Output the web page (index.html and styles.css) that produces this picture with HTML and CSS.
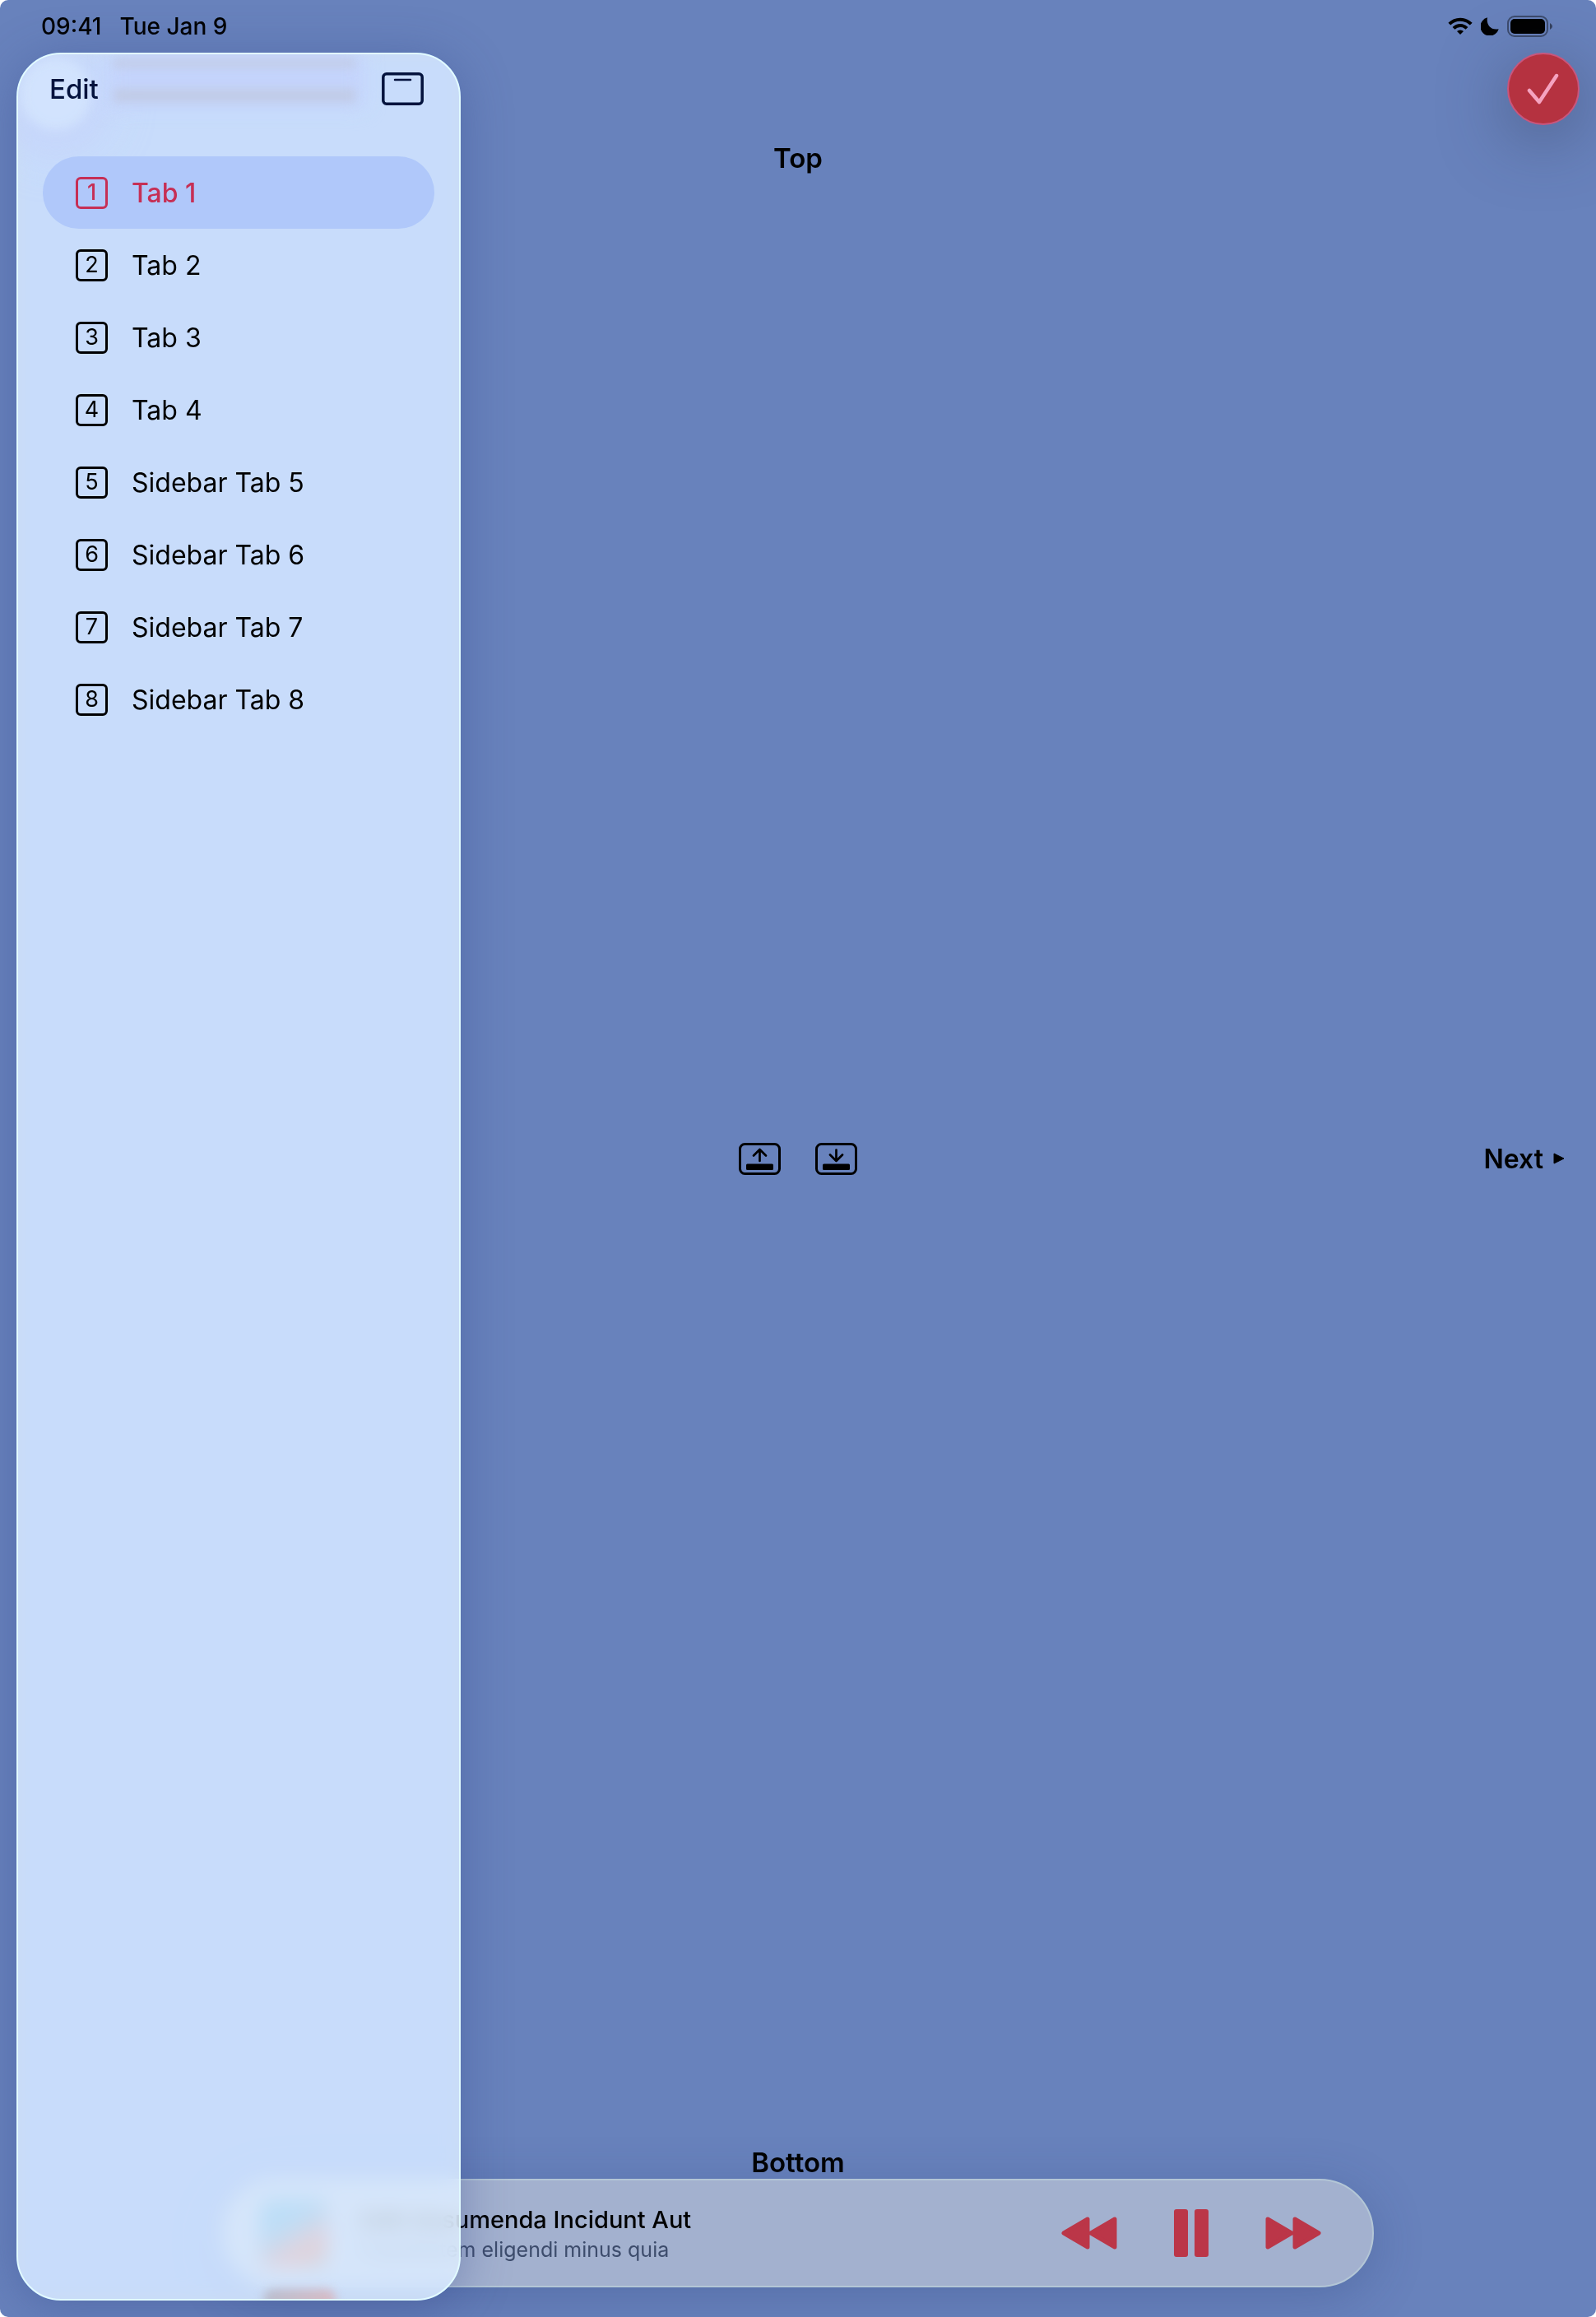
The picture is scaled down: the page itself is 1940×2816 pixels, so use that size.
FILE: index.html
```html
<!DOCTYPE html>
<html lang="en">
<head>
<meta charset="utf-8">
<meta name="viewport" content="width=device-width, initial-scale=1">
<title>Tabs</title>
<link rel="stylesheet" href="styles.css">
</head>
<body>
<div class="screen">
  <header class="status">
    <div class="status-group">
      <time>09:41</time>
      <span>Tue Jan 9</span>
    </div>
    <div class="status-icons">
      <svg width="30" height="22" viewBox="0 0 30 22" role="img" aria-label="Wi-Fi">
        <g fill="none" stroke="#000" stroke-width="4">
          <path d="M1.8 8.2a18.6 18.6 0 0 1 26.4 0"/>
          <path d="M7 13.4a11.3 11.3 0 0 1 16 0"/>
        </g>
        <path d="M15 21l-4-4a5.8 5.8 0 0 1 8 0z"/>
      </svg>
      <svg width="22" height="22" viewBox="0 0 22 22" role="img" aria-label="Focus">
        <path d="M8 .3C6.200 8.500 12 16.500 21.700 14.200A11.300 11.300 0 1 1 8 .3z"/>
      </svg>
      <svg width="56" height="26" viewBox="0 0 56 26" role="img" aria-label="Battery full">
        <rect x="1" y="1" width="48" height="24" rx="8" fill="none" stroke="#000" stroke-opacity=".42" stroke-width="2"/>
        <rect x="4" y="4" width="42" height="18" rx="5"/>
        <path d="M52 9q6 4 0 8z" fill-opacity=".5"/>
      </svg>
    </div>
  </header>

  <main class="content">
    <h1 class="label">Top</h1>
    <div class="middle">
      <div class="center-actions">
        <button class="plain" type="button" aria-label="Expand accessory">
          <svg width="51" height="39" viewBox="0 0 51 39">
            <rect x="1.500" y="1.500" width="48" height="36" rx="6" fill="none" stroke="#000" stroke-width="3"/>
            <rect x="9" y="25.500" width="33" height="7.500" rx="1.500"/>
            <path d="M25.500 22V8.500M18 15.500l7.500-7.500 7.500 7.500" fill="none" stroke="#000" stroke-width="2.700" stroke-linecap="round" stroke-linejoin="round"/>
          </svg>
        </button>
        <button class="plain" type="button" aria-label="Collapse accessory">
          <svg width="51" height="39" viewBox="0 0 51 39">
            <rect x="1.500" y="1.500" width="48" height="36" rx="6" fill="none" stroke="#000" stroke-width="3"/>
            <rect x="9" y="25.500" width="33" height="7.500" rx="1.500"/>
            <path d="M25.500 8.500V22M18 14.500l7.500 7.500 7.500-7.500" fill="none" stroke="#000" stroke-width="2.700" stroke-linecap="round" stroke-linejoin="round"/>
          </svg>
        </button>
      </div>
      <button class="plain next" type="button">Next
        <svg width="14" height="14" viewBox="0 0 14 14" aria-hidden="true"><path d="M1 1l12 6-12 6z" stroke="#000" stroke-linejoin="round"/></svg>
      </button>
    </div>
    <p class="label">Bottom</p>
  </main>

  <section class="player" aria-label="Now playing">
    <div class="artwork"></div>
    <div class="track">
      <p class="track-title">Odit Assumenda Incidunt Aut</p>
      <p class="track-sub">Cupiditatem eligendi minus quia</p>
    </div>
    <div class="controls">
      <button class="plain" type="button" aria-label="Rewind">
        <svg width="68" height="58" viewBox="0 0 68 58"><path d="M3 29L32 12v34zM36 29l29-17v34z" stroke-width="5" stroke-linejoin="round"/></svg>
      </button>
      <button class="plain" type="button" aria-label="Pause">
        <svg width="68" height="58" viewBox="0 0 68 58"><rect x="13" width="17" height="58" rx="3"/><rect x="38" width="17" height="58" rx="3"/></svg>
      </button>
      <button class="plain" type="button" aria-label="Fast forward">
        <svg width="68" height="58" viewBox="0 0 68 58"><path d="M3 12l29 17L3 46zM36 12l29 17-29 17z" stroke-width="5" stroke-linejoin="round"/></svg>
      </button>
    </div>
  </section>

  <button class="confirm" type="button" aria-label="Done">
    <svg width="40" height="40" viewBox="0 0 40 40"><path d="M3 22l12 14L36 4" fill="none" stroke="#f5a3c0" stroke-width="4.500" stroke-linecap="round" stroke-linejoin="round"/></svg>
  </button>

  <aside class="sidebar">
    <div class="glass" aria-hidden="true">
      <span class="glow"></span>
      <span class="haze"></span>
      <span class="smudge smudge-top"></span>
      <span class="smudge"></span>
      <span class="mirror"></span>
    </div>
    <div class="sidebar-head">
      <button class="plain edit" type="button">Edit</button>
      <button class="plain" type="button" aria-label="Toggle sidebar">
        <svg width="51" height="40" viewBox="0 0 51 40"><g fill="none" stroke="#04133d"><rect x="1.800" y="1.800" width="47.400" height="36.400" rx="4" stroke-width="3.500"/><path d="M16 9h19" stroke-width="2.500" stroke-linecap="round"/></g></svg>
      </button>
    </div>
    <nav class="tabs">
      <a class="tab active" href="#1" aria-current="page"><span class="num">1</span>Tab 1</a>
      <a class="tab" href="#2"><span class="num">2</span>Tab 2</a>
      <a class="tab" href="#3"><span class="num">3</span>Tab 3</a>
      <a class="tab" href="#4"><span class="num">4</span>Tab 4</a>
      <a class="tab" href="#5"><span class="num">5</span>Sidebar Tab 5</a>
      <a class="tab" href="#6"><span class="num">6</span>Sidebar Tab 6</a>
      <a class="tab" href="#7"><span class="num">7</span>Sidebar Tab 7</a>
      <a class="tab" href="#8"><span class="num">8</span>Sidebar Tab 8</a>
    </nav>
  </aside>
</div>
</body>
</html>
```
FILE: styles.css
```css
* { box-sizing: border-box; }

body {
  margin: 0;
  background: #fff;
  color: #000;
  font-family: Inter, "Liberation Sans", sans-serif;
}

p, h1 { margin: 0; }
svg { display: block; }

.screen {
  position: relative;
  display: flex;
  flex-direction: column;
  min-height: 100vh;
  padding-bottom: 36px;
  border-radius: 10px;
  overflow: hidden;
  background: #6882bc;
}

.plain {
  padding: 0;
  border: 0;
  background: none;
  color: inherit;
  font: inherit;
  cursor: pointer;
}

/* Status bar */
.status {
  display: flex;
  align-items: center;
  justify-content: space-between;
  height: 64px;
  padding: 0 52px 0 50px;
  font-size: 28px;
  font-weight: 500;
}
.status-group { display: flex; gap: 22px; }
.status-icons { display: flex; align-items: center; gap: 10px; }

/* Main content */
.content {
  flex: 1;
  display: flex;
  flex-direction: column;
  padding-top: 108px;
}
.label {
  font-size: 33px;
  font-weight: 600;
  line-height: 40px;
  text-align: center;
}
.middle {
  flex: 1;
  display: grid;
  grid-template-columns: 1fr auto 1fr;
  align-items: center;
  padding: 0 38px 4px;
}
.center-actions { grid-column: 2; display: flex; gap: 42px; }
.next {
  display: flex;
  align-items: center;
  justify-self: end;
  gap: 12px;
  font-size: 32px;
  font-weight: 600;
}

/* Player */
.player {
  display: flex;
  align-items: center;
  align-self: center;
  width: calc(100% - 540px);
  height: 132px;
  padding: 0 62px 0 44px;
  border: 2px solid #b3c6d6;
  border-radius: 66px;
  background: #a3b1cf;
  box-shadow: 0 12px 60px rgba(40, 60, 120, .28);
}
.artwork {
  width: 82px;
  height: 82px;
  border-radius: 12px;
  background: linear-gradient(150deg, #4783ad 35%, #77738a 55%, #b0605c 72%, #6f6a68);
}
.track { flex: 1; margin-left: 38px; padding-top: 4px; }
.track-title { font-size: 29px; font-weight: 500; line-height: 36px; }
.track-sub { font-size: 25px; line-height: 36px; color: #3d4c6c; }
.controls { display: flex; gap: 56px; }
.controls svg { fill: #bb3648; stroke: #bb3648; stroke-width: 0; }

/* Confirm button */
.confirm {
  position: absolute;
  top: 64px;
  right: 20px;
  display: grid;
  place-items: center;
  width: 88px;
  height: 88px;
  padding: 0;
  border: 2px solid #c9567c;
  border-radius: 50%;
  background: #b53240;
  box-shadow: 0 16px 80px rgba(50, 60, 90, .5);
}

/* Sidebar overlay */
.sidebar {
  position: absolute;
  top: 64px;
  bottom: 20px;
  left: 20px;
  width: 540px;
  border: 2px solid #e2fbff;
  border-radius: 54px;
  background: rgba(229, 242, 255, .8);
  backdrop-filter: blur(12px) saturate(1.8);
  box-shadow: 0 8px 60px rgba(50, 70, 140, .4);
}
.glass {
  position: absolute;
  inset: 0;
  border-radius: 52px;
  overflow: hidden;
}
.glass span { position: absolute; }
.glass .glow {
  top: 4px;
  left: 2px;
  width: 88px;
  height: 88px;
  border-radius: 50%;
  background: rgba(212, 229, 254, .8);
  box-shadow: 0 10px 50px 20px rgba(196, 208, 250, .6);
  filter: blur(7px);
}
.glass .haze {
  top: 0;
  left: 110px;
  width: 310px;
  height: 64px;
  background: #c5d4fc;
  filter: blur(12px);
}
.glass .smudge {
  top: 42px;
  left: 116px;
  width: 294px;
  height: 16px;
  background: #c1cbe6;
  filter: blur(6px);
}
.glass .smudge-top { top: 6px; height: 10px; }
.glass .mirror {
  bottom: -14px;
  left: 298px;
  width: 88px;
  height: 26px;
  border-radius: 12px;
  background: linear-gradient(90deg, #b9bdcd, #d8bac4);
  filter: blur(6px);
}

.sidebar-head {
  position: relative;
  display: flex;
  align-items: center;
  justify-content: space-between;
  height: 84px;
  padding: 0 43px 0 38px;
}
.edit { font-size: 33px; font-weight: 500; color: #04133d; }

.tabs {
  position: relative;
  padding: 40px 30px 0;
}
.tab {
  display: flex;
  align-items: center;
  gap: 29px;
  height: 88px;
  padding-left: 40px;
  border-radius: 44px;
  color: #000;
  font-size: 32px;
  text-decoration: none;
}
.num {
  display: grid;
  place-items: center;
  width: 39px;
  height: 39px;
  border: 3px solid currentColor;
  border-radius: 6px;
  font-size: 27px;
  line-height: 32px;
}
.active {
  background: #b0c8fa;
  color: #c62f55;
  font-weight: 500;
}
```
